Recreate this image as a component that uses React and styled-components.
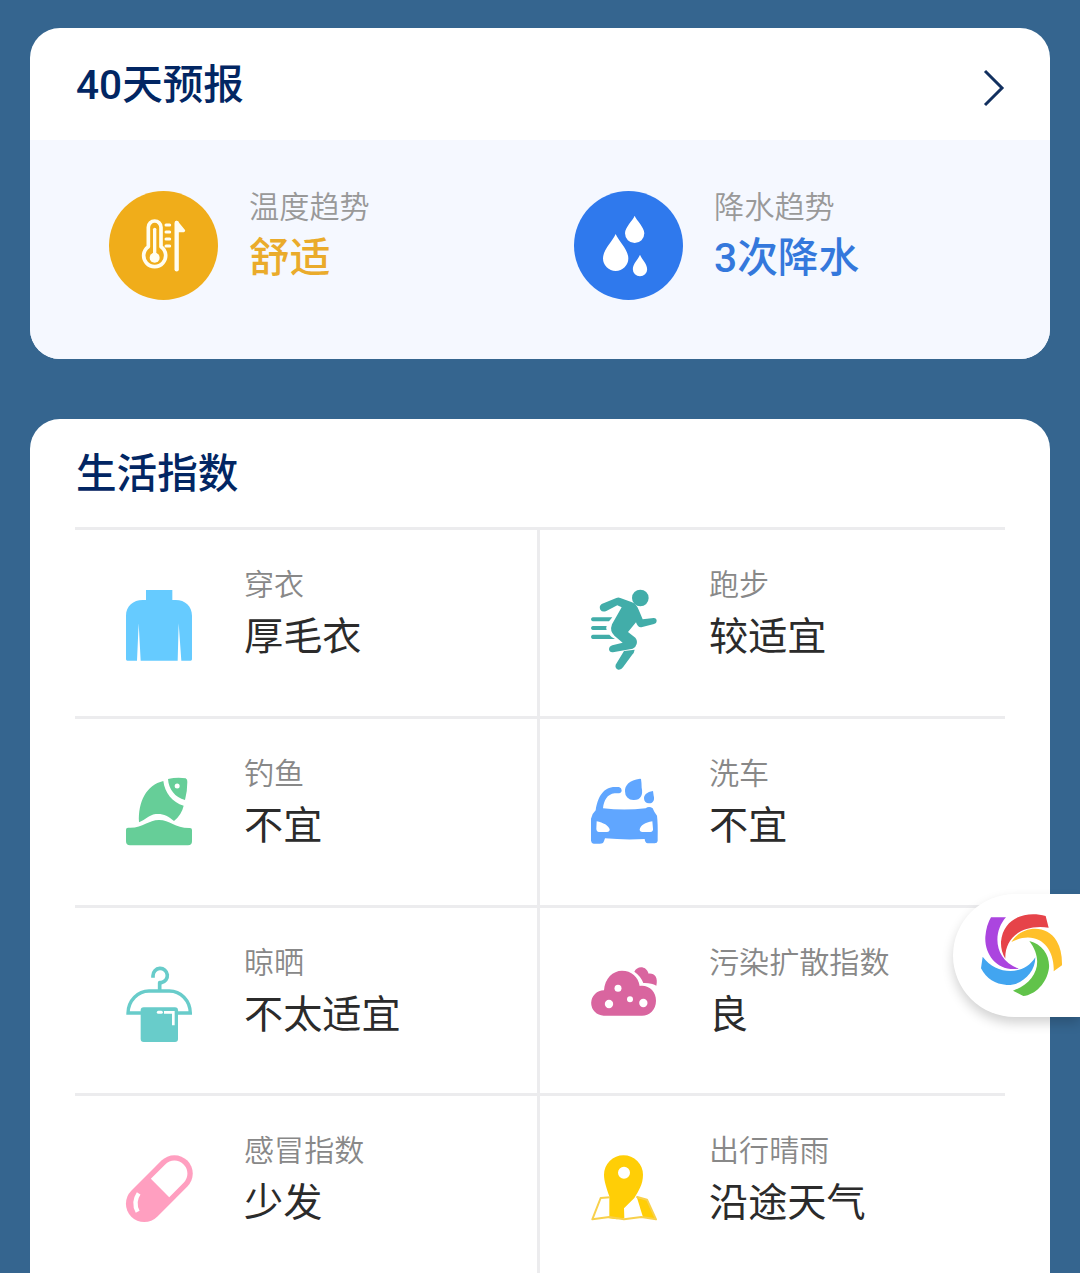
import styled, { createGlobalStyle } from "styled-components";

const DropIcon = ({ x, y, r, h }) => (
  <path
    d={`M${x},${y} C${x + r * 0.2},${y + h * 0.18} ${x + r},${y + h * 0.42} ${x + r},${y + h - r} A${r},${r} 0 0 1 ${x - r},${y + h - r} C${x - r},${y + h * 0.42} ${x - r * 0.2},${y + h * 0.18} ${x},${y}Z`}
  />
);

const trends = [
  {
    label: "温度趋势",
    value: "舒适",
    bg: "#f0ad1a",
    color: "#eaab2b",
    viewBox: "147 422 327 327",
    icon: (
      <g fill="none" stroke="#fffdf0" strokeLinecap="round">
        <path
          d="M265,531 A19,19 0 0 1 303,531 V589 A33,33 0 1 1 265,589 Z"
          strokeWidth="11"
          strokeLinejoin="round"
        />
        <path d="M284,537 V610" strokeWidth="10" />
        <circle cx="284" cy="622" r="15" fill="#fffdf0" stroke="none" />
        <path d="M318,524 H329 M318,545 H329 M318,566 H329 M318,587 H329" strokeWidth="9" />
        <path d="M350,518 V657" strokeWidth="13" />
        <path d="M350,516 L371,541 H350 Z" fill="#fffdf0" strokeWidth="9" strokeLinejoin="round" />
      </g>
    ),
  },
  {
    label: "降水趋势",
    value: "3次降水",
    bg: "#2f79ed",
    color: "#3478dc",
    viewBox: "42 63 327 327",
    icon: (
      <g fill="#fff">
        <DropIcon x={224} y={137} r={29} h={82} />
        <DropIcon x={167} y={192} r={38} h={111} />
        <DropIcon x={240} y={254} r={21.5} h={65} />
      </g>
    ),
  },
];

const indexes = [
  {
    label: "穿衣",
    value: "厚毛衣",
    viewBox: "0 0 294 330",
    icon: (
      <path
        fill="#66cbff"
        d="M108,60 H187 V90 H197 C225,90 246,108 246,137 V268 Q246,272 242,272 H214 L206,160 L203,272 H92 L86,160 L81,272 H52 Q48,272 48,268 V137 C48,108 70,90 98,90 H108 Z"
      />
    ),
  },
  {
    label: "跑步",
    value: "较适宜",
    viewBox: "0 0 294 330",
    icon: (
      <g fill="#42ada9">
        <circle cx="196" cy="84" r="25" />
        <path d="M124,84 Q130,81 136,84 L171,97 Q184,102 191,119 L203,148 L236,144 Q245,144 245,153 Q245,160 237,162 L199,172 Q188,173 183,157 L159,186 L181,203 Q188,211 185,222 Q182,233 173,236 L114,247 Q103,248 102,238 Q102,229 112,226 L143,218 L119,198 Q103,184 111,163 L140,112 L127,106 L94,123 Q82,128 76,119 Q71,109 80,102 Z" />
        <path d="M147,243 L179,239 Q178,248 171,255 L144,292 Q139,300 130,299 Q119,295 122,284 Z" />
        <path d="M53,142 H112 L102,154 H53 Q48,153 48,148 Q48,143 53,142Z M53,168 H95 Q92,174 95,180 H53 Q48,179 48,174 Q48,169 53,168Z M53,194 H103 Q109,202 120,207 H53 Q48,206 48,200 Q48,195 53,194Z" />
      </g>
    ),
  },
  {
    label: "钓鱼",
    value: "不宜",
    viewBox: "0 -3 294 330",
    icon: (
      <g fill="#66ce98">
        <path d="M160,63 C164,98 187,127 221,137 Q215,164 192,183 C174,166 158,160 137,162 C116,165 105,180 87,187 C84,125 109,75 160,63Z" />
        <path
          fillRule="evenodd"
          d="M174,57 Q201,51 227,55 Q233,58 232,66 Q232,95 225,120 C195,112 176,88 174,57Z M209,78 A7.5,7.5 0 1 0 194,78 A7.5,7.5 0 1 0 209,78Z"
        />
        <path d="M54,203 C98,206 114,180 147,180 C180,180 195,205 240,204 Q246,204 246,210 V244 Q246,256 234,256 H60 Q48,256 48,244 V209 Q48,203 54,203Z" />
      </g>
    ),
  },
  {
    label: "洗车",
    value: "不宜",
    viewBox: "0 -19 294 330",
    icon: (
      <g fill="#60a6ff">
        <path
          fillRule="evenodd"
          d="M62,135 C68,95 85,65 120,65 H132 Q140,67 140,75 Q140,83 132,84 H119 C96,87 87,105 84,129 Q148,136 212,129 Q222,121 233,129 Q236,138 246,151 Q249,176 248,215 V227 Q247,234 239,234 H218 Q210,233 209,221 Q148,224 90,219 Q87,229 84,233 Q80,235 74,235 H56 Q49,234 48,226 V160 Q52,144 62,135Z M65,168 C85,172 101,181 104,192 Q104,200 96,200 H72 Q64,199 64,190Z M232,168 C210,171 197,181 194,192 Q194,200 202,200 H226 Q235,199 234,190Z"
        />
        <path d="M195,40 C163,44 149,60 150,78 A25,25 0 0 0 175,104 C197,105 205,89 200,67 Q200,53 198,41Z" />
        <path d="M234,77 C215,80 207,89 207,99 A14.5,14.5 0 0 0 222,114 C237,114 239,101 236,91 Q235,84 234,77Z" />
      </g>
    ),
  },
  {
    label: "晾晒",
    value: "不太适宜",
    viewBox: "0 -6 294 330",
    icon: (
      <g fill="none" stroke="#68ccca">
        <path
          d="M129,83 V77 A21.5,21.5 0 1 1 154,98 H149 V122"
          strokeWidth="11"
          strokeLinejoin="round"
        />
        <path
          d="M93,189 H54 C55,151 84,123 117,123 H178 C212,123 240,151 241,189 H203"
          strokeWidth="10"
        />
        <rect x="92" y="172" width="112" height="104" rx="9" fill="#68ccca" stroke="none" />
        <path d="M162,187 H190 V226" stroke="#fff" strokeWidth="8" />
        <path d="M145,187 H154" stroke="#fff" strokeWidth="9" strokeLinecap="round" />
      </g>
    ),
  },
  {
    label: "污染扩散指数",
    value: "良",
    viewBox: "0 -6 294 330",
    icon: (
      <g fill="#d9659f">
        <path d="M86,197 A38,38 0 0 1 87,121 C89,85 114,62 141,62 C169,62 190,80 194,108 C222,104 243,125 243,152 C243,179 223,197 201,197Z" />
        <path d="M178,65 C186,47 213,45 221,71 C238,69 250,82 244,107 Q229,98 205,99 Q197,78 178,65Z" />
        <g fill="#fff">
          <circle cx="129" cy="115" r="10.5" />
          <circle cx="102" cy="162" r="12.5" />
          <circle cx="165" cy="148" r="9" />
          <circle cx="205" cy="159" r="12.5" />
        </g>
      </g>
    ),
  },
  {
    label: "感冒指数",
    value: "少发",
    viewBox: "0 -12 294 330",
    icon: (
      <g>
        <g transform="rotate(-45 148 146)">
          <rect x="29" y="91" width="238" height="110" rx="55" fill="#ff9fc0" />
          <path d="M151,107 H212 A39,39 0 0 1 212,185 H151Z" fill="#fff" />
        </g>
        <path d="M86,160 Q68,187 83,215" fill="none" stroke="#fff" strokeWidth="13" />
      </g>
    ),
  },
  {
    label: "出行晴雨",
    value: "沿途天气",
    viewBox: "0 -13 294 330",
    icon: (
      <g fill="#ffce06">
        <path
          fillRule="evenodd"
          d="M103,234 V168 C94,142 87,121 87,103 A58.5,58.5 0 0 1 204,103 C204,133 190,152 178,173 L147,204 L148,234 Q125,239 103,234Z M165,97 A18,18 0 1 0 129,97 A18,18 0 1 0 165,97Z"
        />
        <path d="M186,172 L216,178 L242,236 L204,231Z" />
        <path
          d="M105,171 L77,173 L52,237 L103,230 L147,237 L199,230 L243,237 L216,178 L184,169"
          fill="none"
          stroke="#f8d04b"
          strokeWidth="6"
          strokeLinejoin="round"
        />
      </g>
    ),
  },
];

const GlobalStyle = createGlobalStyle`
  * {
    box-sizing: border-box;
  }

  body {
    margin: 0;
    background-color: #35658f;
    font-family: Roboto, "Noto Sans CJK SC", sans-serif;
  }
`;

const Page = styled.main`
  display: flex;
  flex-direction: column;
  gap: 60px;

  width: 1080px;
  height: 1273px;
  padding: 28px 30px 0;
  overflow: hidden;
`;

const Card = styled.section`
  flex-shrink: 0;
  border-radius: 30px;
  background-color: #fff;
  overflow: hidden;
`;

const ForecastHeader = styled.header`
  display: flex;
  align-items: center;
  justify-content: space-between;

  height: 112px;
  padding: 0 44px 0 46px;
`;

const LifeHeader = styled.header`
  display: flex;
  align-items: center;

  height: 108px;
  padding: 0 46px;
`;

const Title = styled.h2`
  margin: 0;
  padding-top: 2px;
  color: #022663;
  font-size: 40.6px;
  font-weight: 500;
  line-height: 60px;
`;

const Chevron = styled.svg`
  width: 24px;
  height: 40px;
  margin-top: 8px;
`;

const Trends = styled.div`
  display: grid;
  grid-template-columns: 465px 1fr;

  height: 219px;
  padding: 51px 0 0 79px;
  background-color: #f5f8ff;
`;

const Trend = styled.div`
  display: flex;
  align-items: flex-start;
  gap: 31px;
`;

const TrendIcon = styled.div`
  width: 109px;
  height: 109px;
  border-radius: 50%;
  background-color: ${(p) => p.$bg};

  svg {
    display: block;
    width: 100%;
  }
`;

const TrendText = styled.div`
  padding-top: 2px;
`;

const TrendLabel = styled.div`
  color: #999;
  font-size: 30.2px;
  font-weight: 350;
  line-height: 30px;
`;

const TrendValue = styled.div`
  margin-top: 5px;
  color: ${(p) => p.$color};
  font-size: 40.7px;
  font-weight: 500;
  line-height: 60px;
`;

const Grid = styled.div`
  display: grid;
  grid-template-columns: 465px 465px;
  grid-template-rows: 189px 189px 188px 220px;

  padding: 0 45px;
`;

const Cell = styled.div`
  display: flex;
  align-items: flex-start;
  gap: 36px;

  padding: 40px 0 0 35px;
  border-top: 3px solid #ececee;

  &:nth-child(odd) {
    border-right: 3px solid #ececee;
  }
`;

const CellIcon = styled.svg`
  flex-shrink: 0;
  width: 98px;
  height: 110px;
`;

const CellLabel = styled.div`
  color: #888;
  font-size: 30.1px;
  font-weight: 350;
  line-height: 30px;
`;

const CellValue = styled.div`
  margin-top: 7px;
  color: #2b2b2b;
  font-size: 39.2px;
  font-weight: 400;
  line-height: 60px;
`;

const Floating = styled.aside`
  position: absolute;
  top: 894px;
  left: 953px;

  width: 127px;
  height: 123px;
  border-radius: 62px 0 0 62px;
  background-color: #fff;
  box-shadow: 0 6px 12px rgba(0, 0, 0, 0.18);

  svg {
    display: block;
    width: 127px;
    height: 123px;
  }
`;

const App = () => (
  <>
    <GlobalStyle />
    <Page>
      <Card>
        <ForecastHeader>
          <Title>40天预报</Title>
          <Chevron viewBox="0 0 24 40">
            <path d="M3,3 L20,20 L3,37" fill="none" stroke="#12305f" strokeWidth="3" />
          </Chevron>
        </ForecastHeader>
        <Trends>
          {trends.map(({ label, value, bg, color, viewBox, icon }) => (
            <Trend key={label}>
              <TrendIcon $bg={bg}>
                <svg viewBox={viewBox}>{icon}</svg>
              </TrendIcon>
              <TrendText>
                <TrendLabel>{label}</TrendLabel>
                <TrendValue $color={color}>{value}</TrendValue>
              </TrendText>
            </Trend>
          ))}
        </Trends>
      </Card>

      <Card>
        <LifeHeader>
          <Title>生活指数</Title>
        </LifeHeader>
        <Grid>
          {indexes.map(({ label, value, viewBox, icon }) => (
            <Cell key={label}>
              <CellIcon viewBox={viewBox}>{icon}</CellIcon>
              <div>
                <CellLabel>{label}</CellLabel>
                <CellValue>{value}</CellValue>
              </div>
            </Cell>
          ))}
        </Grid>
      </Card>

      <Floating>
        <svg viewBox="39 42 381 369">
          <path fill="#e64349" d="M326,143 L317,108 C262,92 190,110 183,185 Q182,214 196,236 C194,178 240,132 326,143Z" />
          <path fill="#ffc02a" d="M214,186 C246,136 320,132 350,183 Q367,212 366,256 L341,274 C345,205 295,145 214,186Z" />
          <path fill="#61c34a" d="M268,183 C308,192 330,228 327,264 C321,310 285,345 250,348 L219,332 C286,308 316,246 268,183Z" />
          <path fill="#42a5f0" d="M286,232 C286,278 245,317 200,315 C165,312 140,298 123,265 L128,230 C168,284 250,290 286,232Z" />
          <path fill="#ab45df" d="M236,266 C170,275 133,222 136,170 Q139,135 153,112 L198,112 C158,156 160,238 236,266Z" />
        </svg>
      </Floating>
    </Page>
  </>
);

export default App;
